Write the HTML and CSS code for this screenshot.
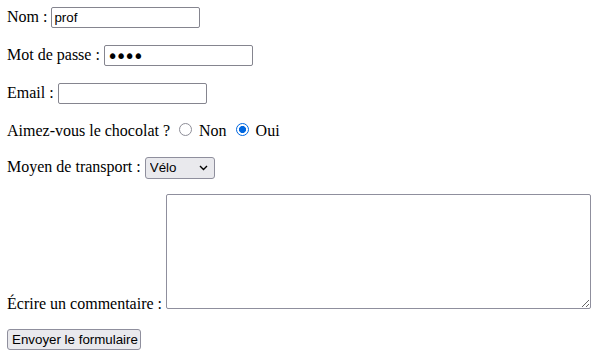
FILE: index.html
```html
<!DOCTYPE html>
<html lang="fr">
<head>
<meta charset="utf-8">
<title>Formulaire</title>
<link rel="stylesheet" href="styles.css">
</head>
<body>
<form class="form">
  <div class="row"><label for="nom">Nom :</label> <input class="field" type="text" id="nom" value="prof"></div>
  <div class="row"><label for="mdp">Mot de passe :</label> <input class="field pwd" type="password" id="mdp" value="prof"></div>
  <div class="row"><label for="email">Email :</label> <input class="field" type="email" id="email"></div>
  <div class="row-text">Aimez-vous le chocolat ? <input class="radio" type="radio" name="choco" id="non"> <label for="non">Non</label> <input class="radio" type="radio" name="choco" id="oui" checked> <label for="oui">Oui</label></div>
  <div class="row"><label for="transport">Moyen de transport :</label> <span class="select-wrap"><select class="select" id="transport"><option>Vélo</option><option>Voiture</option><option>Train</option></select><svg class="chev" width="9" height="6" viewBox="0 0 9 6"><path d="M1 1 L4.5 4.5 L8 1" fill="none" stroke="#000" stroke-width="1.4"/></svg></span></div>
  <div class="row-text"><label for="comm">Écrire un commentaire :</label> <textarea class="area" id="comm"></textarea></div>
  <div class="row-btn"><button class="btn" type="submit">Envoyer le formulaire</button></div>
</form>
</body>
</html>
```
FILE: styles.css
```css
html, body {
  background: #fff;
}
body {
  margin: 6px 7px;
  font-family: "Liberation Serif", "Times New Roman", serif;
  font-size: 16px;
  color: #000;
}
.form {
  display: flex;
  flex-direction: column;
  gap: 16px;
}
.row {
  line-height: 22px;
  height: 22px;
}
.row-text {
  line-height: normal;
}
.field {
  box-sizing: border-box;
  width: 149px;
  height: 21px;
  font-family: "Liberation Sans", Arial, sans-serif;
  font-size: 13.33px;
  padding: 1px 2px;
  border: 1px solid #85858f;
  border-radius: 2px;
  vertical-align: baseline;
}
.pwd {
  vertical-align: top;
  margin-top: 1px;
  padding: 0 2px;
  font-family: "DejaVu Sans", sans-serif;
  font-size: 19px;
  letter-spacing: -2.6px;
  -webkit-text-security: disc;
}
.radio {
  -webkit-appearance: none;
  appearance: none;
  box-sizing: border-box;
  width: 13px;
  height: 13px;
  margin: 3px 3px 0 5px;
  border: 1.5px solid #8d8d97;
  border-radius: 50%;
  background: #fff;
  vertical-align: baseline;
}
.radio:checked {
  border: 1.5px solid #0067e0;
  background: radial-gradient(circle, #0067e0 0 3.3px, #fff 3.8px);
}
.select-wrap {
  position: relative;
  display: inline-block;
  vertical-align: baseline;
}
.select {
  -webkit-appearance: none;
  appearance: none;
  box-sizing: border-box;
  width: 70px;
  height: 22px;
  padding: 0 0 0 4px;
  font-family: "Liberation Sans", Arial, sans-serif;
  font-size: 13.33px;
  color: #000;
  border: 1px solid #8f8f9d;
  border-radius: 3px;
  background: #e9e9ed;
}
.chev {
  position: absolute;
  right: 7px;
  top: 9px;
  pointer-events: none;
}
.area {
  box-sizing: border-box;
  width: 425px;
  height: 115px;
  margin: 0;
  border: 1px solid #8f8f9d;
  border-radius: 2px;
  font-family: "Liberation Mono", monospace;
  font-size: 13.33px;
  vertical-align: baseline;
}
.row-btn {
  display: flex;
}
.btn {
  box-sizing: border-box;
  width: 134px;
  height: 21px;
  padding: 0 4px;
  font-family: "Liberation Sans", Arial, sans-serif;
  font-size: 13.33px;
  background: #e9e9ed;
  border: 1px solid #8f8f9d;
  border-radius: 3px;
  color: #000;
  white-space: nowrap;
}
```
